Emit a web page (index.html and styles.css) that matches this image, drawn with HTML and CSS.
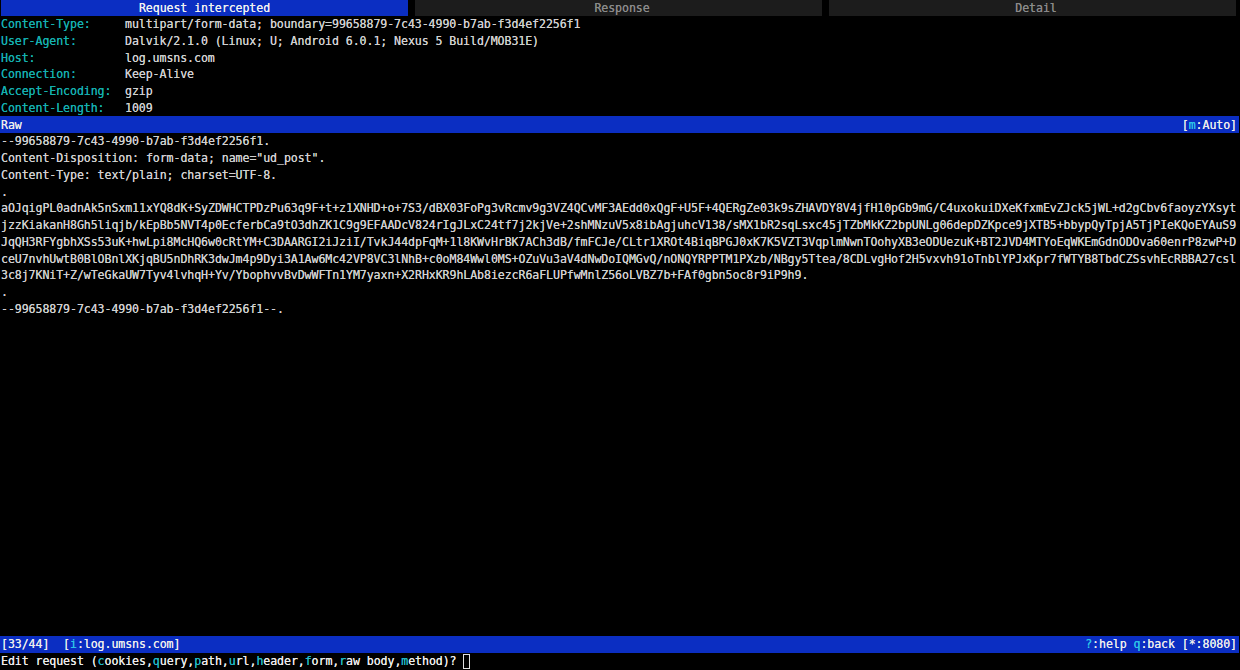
FILE: index.html
```html
<!DOCTYPE html>
<html lang="en">
<head>
<meta charset="utf-8">
<title>mitmproxy</title>
<link rel="stylesheet" href="styles.css">
</head>
<body>
<div class="term">
  <div class="tabs">
    <div class="tab active">Request intercepted</div>
    <div class="tab">Response</div>
    <div class="tab">Detail</div>
  </div>
  <div class="headers">
    <div class="hname">Content-Type:</div><div>multipart/form-data; boundary=99658879-7c43-4990-b7ab-f3d4ef2256f1</div>
    <div class="hname">User-Agent:</div><div>Dalvik/2.1.0 (Linux; U; Android 6.0.1; Nexus 5 Build/MOB31E)</div>
    <div class="hname">Host:</div><div>log.umsns.com</div>
    <div class="hname">Connection:</div><div>Keep-Alive</div>
    <div class="hname">Accept-Encoding:</div><div>gzip</div>
    <div class="hname">Content-Length:</div><div>1009</div>
  </div>
  <div class="bar raw"><span>Raw</span><span>[<b>m</b>:Auto]</span></div>
  <div class="body">
    <div>--99658879-7c43-4990-b7ab-f3d4ef2256f1.</div>
    <div>Content-Disposition: form-data; name="ud_post".</div>
    <div>Content-Type: text/plain; charset=UTF-8.</div>
    <div>.</div>
    <div>aOJqigPL0adnAk5nSxm11xYQ8dK+SyZDWHCTPDzPu63q9F+t+z1XNHD+o+7S3/dBX03FoPg3vRcmv9g3VZ4QCvMF3AEdd0xQgF+U5F+4QERgZe03k9sZHAVDY8V4jfH10pGb9mG/C4uxokuiDXeKfxmEvZJck5jWL+d2gCbv6faoyzYXsyt</div>
    <div>jzzKiakanH8Gh5liqjb/kEpBb5NVT4p0EcferbCa9tO3dhZK1C9g9EFAADcV824rIgJLxC24tf7j2kjVe+2shMNzuV5x8ibAgjuhcV138/sMX1bR2sqLsxc45jTZbMkKZ2bpUNLg06depDZKpce9jXTB5+bbypQyTpjA5TjPIeKQoEYAuS9</div>
    <div>JqQH3RFYgbhXSs53uK+hwLpi8McHQ6w0cRtYM+C3DAARGI2iJziI/TvkJ44dpFqM+1l8KWvHrBK7ACh3dB/fmFCJe/CLtr1XROt4BiqBPGJ0xK7K5VZT3VqplmNwnTOohyXB3eODUezuK+BT2JVD4MTYoEqWKEmGdnODOva60enrP8zwP+D</div>
    <div>ceU7nvhUwtB0BlOBnlXKjqBU5nDhRK3dwJm4p9Dyi3A1Aw6Mc42VP8VC3lNhB+c0oM84Wwl0MS+OZuVu3aV4dNwDoIQMGvQ/nONQYRPPTM1PXzb/NBgy5Ttea/8CDLvgHof2H5vxvh91oTnblYPJxKpr7fWTYB8TbdCZSsvhEcRBBA27csl</div>
    <div>3c8j7KNiT+Z/wTeGkaUW7Tyv4lvhqH+Yv/YbophvvBvDwWFTn1YM7yaxn+X2RHxKR9hLAb8iezcR6aFLUPfwMnlZ56oLVBZ7b+FAf0gbn5oc8r9iP9h9.</div>
    <div>.</div>
    <div>--99658879-7c43-4990-b7ab-f3d4ef2256f1--.</div>
  </div>
  <div class="bar status"><span class="keep">[33/44]  [<b>i</b>:log.umsns.com]</span><span><b>?</b>:help <b>q</b>:back [*:8080]</span></div>
  <div class="prompt"><span class="keep">Edit request (<b>c</b>ookies,<b>q</b>uery,<b>p</b>ath,<b>u</b>rl,<b>h</b>eader,<b>f</b>orm,<b>r</b>aw body,<b>m</b>ethod)? </span><i class="cursor"></i></div>
</div>
</body>
</html>
```
FILE: styles.css
```css
* { box-sizing: border-box; }
html, body { margin: 0; padding: 0; background: #000; }
.term {
  width: 1240px;
  height: 670px;
  overflow: hidden;
  display: flex;
  flex-direction: column;
  font-family: "DejaVu Sans Mono", monospace;
  font-size: 11.6px;
  letter-spacing: -0.08px;
  line-height: 16.75px;
  color: #d0d0d0;
  text-shadow: 0 0 0.6px currentColor;
  background: #000;
}
.keep { white-space: pre; }
.tabs {
  display: grid;
  grid-template-columns: repeat(3, 1fr);
  gap: 7px;
  height: 16px;
  margin: 0 4px 0 1px;
  flex: none;
}
.tab {
  background: #1c1c1c;
  color: #8a8a8a;
  text-align: center;
  line-height: 16px;
  padding-left: 7px;
}
.tab.active { background: #0b2ec2; color: #f0f0f0; padding-left: 0; }
.headers {
  display: grid;
  grid-template-columns: 124px 1fr;
  grid-auto-rows: 16.75px;
  padding: 0 0 0 1px;
  height: 100px;
  flex: none;
}
.hname { color: #14b0b0; }
.bar {
  flex: none;
  height: 17px;
  margin-right: 1px;
  padding: 0 2px 0 1px;
  display: flex;
  justify-content: space-between;
  background: #0b2ec2;
  color: #ececec;
}
.raw { line-height: 18px; }
.bar b { font-weight: normal; color: #2cc4e8; }
.body {
  flex: 1;
  padding: 0.4px 0 0 1px;
  overflow: hidden;
}
.body div { white-space: nowrap; }
.status { height: 16.5px; }
.prompt {
  flex: none;
  height: 17.5px;
  padding-left: 1px;
  color: #ececec;
  display: flex;
  align-items: flex-start;
}
.prompt b { font-weight: normal; color: #20b8c8; }
.cursor {
  display: block;
  width: 7px;
  height: 15px;
  margin-top: 1px;
  border: 1px solid #e0e0e0;
}
```
